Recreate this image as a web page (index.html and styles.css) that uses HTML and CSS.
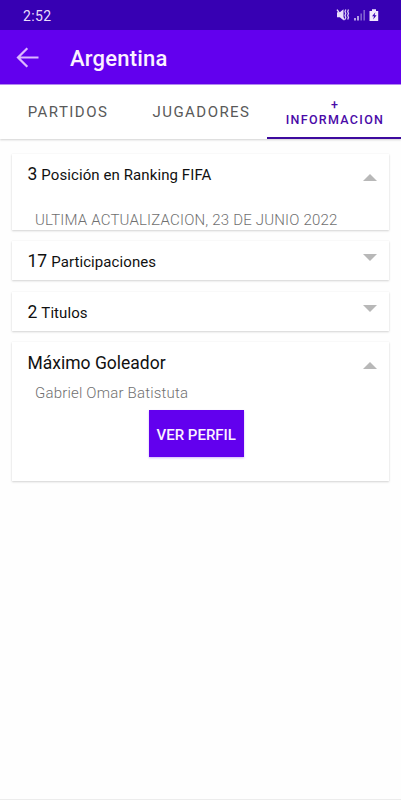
FILE: index.html
```html
<!DOCTYPE html>
<html lang="es">
<head>
<meta charset="utf-8">
<title>Argentina</title>
<link rel="stylesheet" href="styles.css">
</head>
<body>
<div class="screen">
  <div class="status">
    <span class="clock">2:52</span>
    <svg class="status-icons" width="44" height="14" viewBox="0 0 44 14">
      <path d="M2 4.300h2.800L8.500 1.200v11L4.800 9.200H2z" fill="#e9defb"/>
      <path d="M2 1.600l7.500 10.500" stroke="#e9defb" stroke-width="1.400"/>
      <path d="M10.800 1.500l-.8 2 .8 2-.8 2 .8 2-.8 2M13.500 1.500l-.8 2 .8 2-.8 2 .8 2-.8 2" fill="none" stroke="#d9c8f5" stroke-width="1.300"/>
      <path d="M20 10v2.500" stroke="#e9defb" stroke-width="1.400"/>
      <path d="M23 8v4.500" stroke="#e9defb" stroke-width="1.400"/>
      <path d="M26.200 5.500v7M29.200 2v10.500" stroke="#8060cf" stroke-width="1.600"/>
      <path d="M34.500 3h2.500V1.200h4V3h2.200v10h-8.700z" fill="#f1e8fd"/>
      <path d="M40.400 4.200l-3.400 4h2l-.8 3.200 3.400-4.200h-2z" fill="#3700b3"/>
    </svg>
  </div>
  <header class="appbar">
    <svg class="back" width="24" height="22" viewBox="0 0 24 22">
      <path d="M22.500 10.500H2M11.300 1.200L2 10.500l9.300 9.300" fill="none" stroke="#dcb8ff" stroke-width="2.200"/>
    </svg>
    <h1 class="title">Argentina</h1>
  </header>
  <nav class="tabs">
    <div class="tab">PARTIDOS</div>
    <div class="tab">JUGADORES</div>
    <div class="tab tab-active"><span>+</span><span>INFORMACION</span></div>
  </nav>
  <main class="cards">
    <section class="card card-ranking">
      <div class="row"><span class="num">3</span><span class="label">Posición en Ranking FIFA</span>
        <svg class="caret" width="14" height="7" viewBox="0 0 14 7"><path d="M0 7L7 0l7 7z"/></svg></div>
      <p class="detail detail-date">ULTIMA ACTUALIZACION, 23 DE JUNIO 2022</p>
    </section>
    <section class="card card-closed">
      <div class="row"><span class="num">17</span><span class="label">Participaciones</span>
        <svg class="caret" width="14" height="7" viewBox="0 0 14 7"><path d="M0 0h14L7 7z"/></svg></div>
    </section>
    <section class="card card-closed">
      <div class="row"><span class="num">2</span><span class="label">Titulos</span>
        <svg class="caret" width="14" height="7" viewBox="0 0 14 7"><path d="M0 0h14L7 7z"/></svg></div>
    </section>
    <section class="card card-scorer">
      <div class="row"><span class="heading">Máximo Goleador</span>
        <svg class="caret" width="14" height="7" viewBox="0 0 14 7"><path d="M0 7L7 0l7 7z"/></svg></div>
      <p class="detail">Gabriel Omar Batistuta</p>
      <button class="profile">VER PERFIL</button>
    </section>
  </main>
</div>
</body>
</html>
```
FILE: styles.css
```css
* { box-sizing: border-box; margin: 0; }
body { background: #fefefe; font-family: Roboto, "Liberation Sans", sans-serif; }
.screen { height: 800px; display: flex; flex-direction: column; border-bottom: 1px solid #ececec; overflow: hidden; }
.status { flex: none; height: 30px; background: #3700b3; display: flex; justify-content: space-between; align-items: center; padding: 1px 22px 0 23px; }
.clock { color: #e9defb; font-size: 14px; line-height: 20px; letter-spacing: 0.4px; }
.status-icons { margin-top: -1px; }
.appbar { flex: none; height: 54px; background: #6200ee; display: flex; align-items: center; padding: 2px 0 0 16px; }
.back { flex: none; }
.title { margin: 2px 0 0 30px; color: #fbf2ff; font-size: 22px; line-height: 28px; font-weight: 500; letter-spacing: 0.2px; }
.tabs { flex: none; height: 55px; display: grid; grid-template-columns: 134px 133px 134px; background: #fff; border-top: 1px solid #b388f0; box-shadow: 0 1px 2px rgba(0,0,0,.18); }
.tab { display: flex; align-items: center; justify-content: center; color: #595959; font-size: 15px; line-height: 16px; letter-spacing: 1.450px; padding: 0 0 0 2px; }
.tab-active { flex-direction: column; color: #4a0aa8; font-size: 12.500px; line-height: 15px; letter-spacing: 1.300px; font-weight: 500; border-bottom: 2px solid #3d0a9e; padding: 1px 0 0 2px; }
.cards { padding: 15px 12px 0; display: flex; flex-direction: column; }
.card { background: #fff; box-shadow: 0 1px 2px rgba(0,0,0,.17), 0 0 1px rgba(0,0,0,.06); padding: 0 12px 0 15.500px; }
.card-ranking { height: 76px; padding-top: 8px; margin-bottom: 11px; }
.card-closed { height: 39px; padding-top: 8px; margin-bottom: 12px; }
.card-closed + .card-scorer { margin-top: -1px; }
.card-scorer { height: 139px; padding-top: 9px; display: flex; flex-direction: column; }
.row { display: flex; align-items: baseline; height: 24px; line-height: 24px; color: #111; }
.num { font-size: 17.500px; margin-right: 4px; }
.label { font-size: 15px; letter-spacing: 0.090px; }
.heading { font-size: 17.500px; }
.caret { margin-left: auto; align-self: center; fill: #b8b8b8; margin-right: 0.500px; }
.card-ranking .caret { margin-top: 7px; }
.card-scorer .caret { margin-top: 5px; }
.card-closed .caret { margin-top: -7px; }
.detail { color: #707070; font-size: 15px; line-height: 20px; padding-left: 7.500px; font-weight: 300; letter-spacing: 0.190px; }
.detail-date { margin-top: 24px; }
.card-scorer .detail { margin-top: 7.500px; }
.profile { align-self: center; margin: 7.500px 0 0 -12px; width: 95px; height: 47px; padding: 2px 0 0; border: 0; background: #6200ee; color: #fbf2ff; font: 500 15px Roboto, "Liberation Sans", sans-serif; white-space: nowrap; box-shadow: 0 1px 2px rgba(98,0,238,.3); }
```
